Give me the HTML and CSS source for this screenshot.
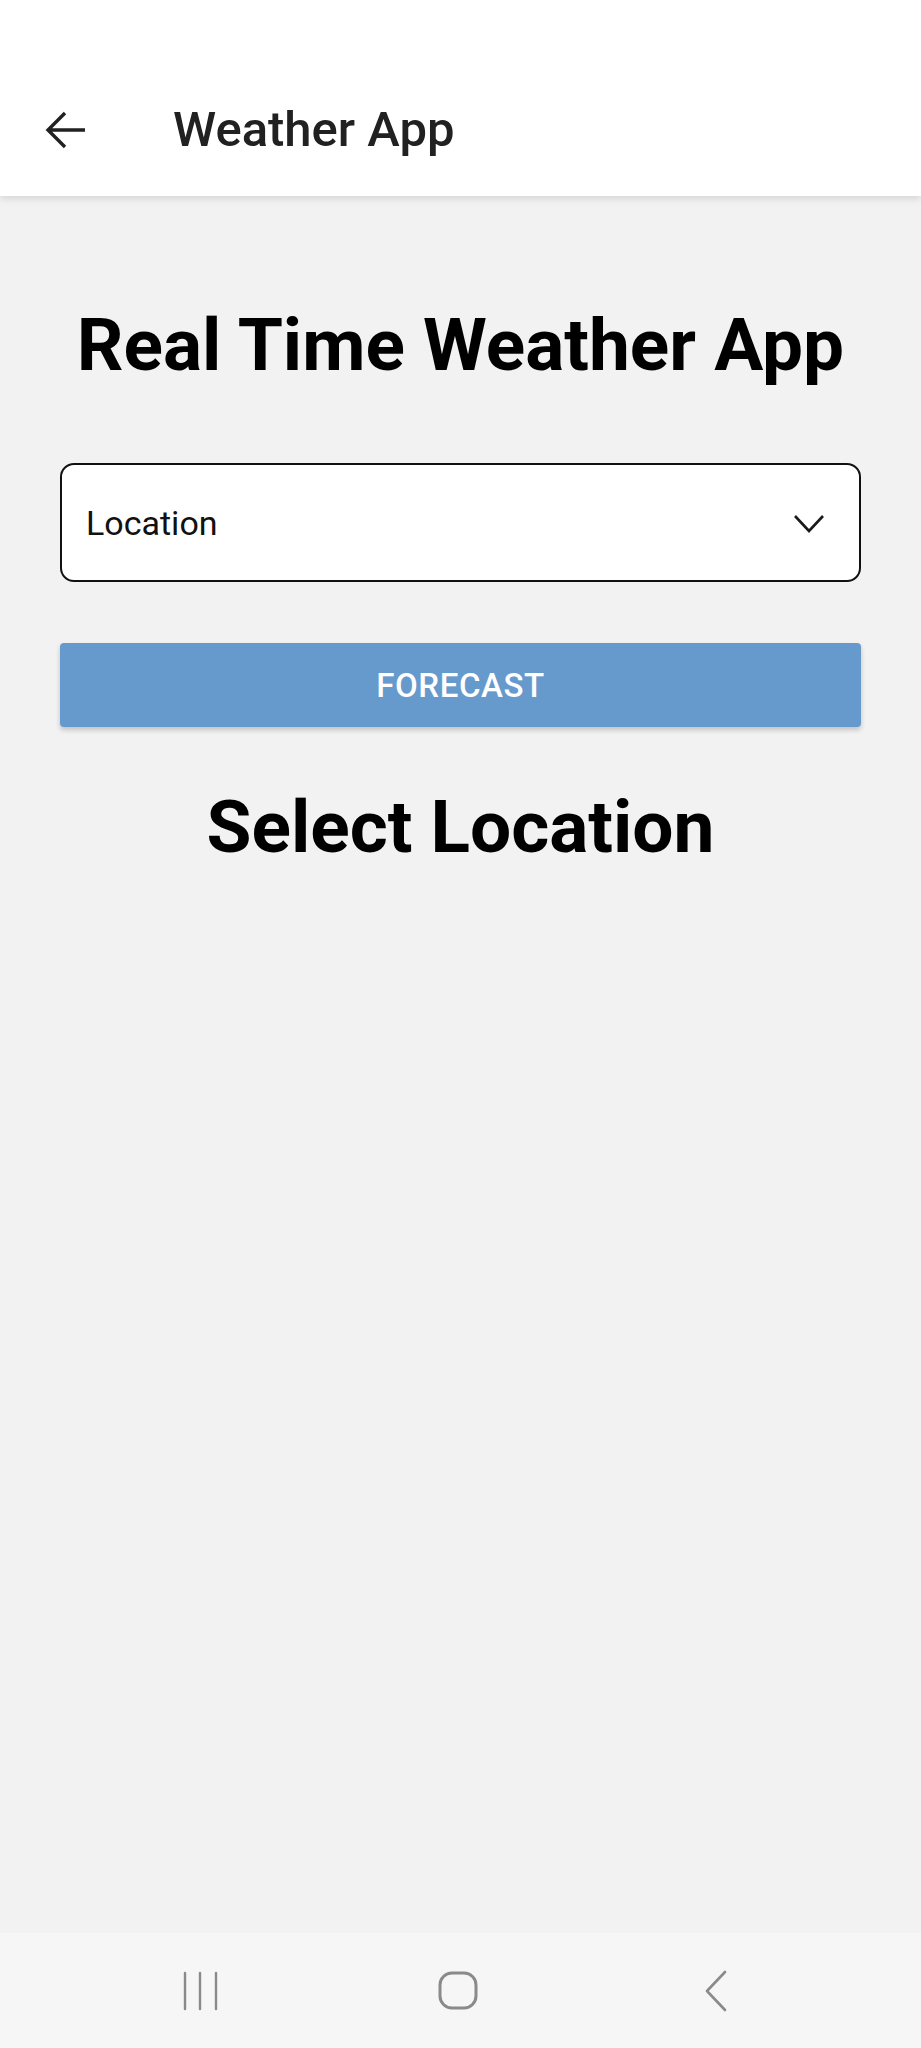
FILE: index.html
```html
<!DOCTYPE html>
<html>
<head>
<meta charset="utf-8">
<link rel="stylesheet" href="styles.css">
</head>
<body>
<div class="screen">
  <header class="topbar">
    <div class="toolbar">
      <svg class="back" width="44" height="40" viewBox="0 0 44 40">
        <path d="M4 20 H41 M21 3 L4 20 L21 37" fill="none" stroke="#212121" stroke-width="3.4" stroke-linecap="butt" stroke-linejoin="miter"/>
      </svg>
      <div class="toolbar-title">Weather App</div>
    </div>
  </header>
  <main class="content">
    <h1 class="title">Real Time Weather App</h1>
    <div class="select">
      <span class="select-text">Location</span>
      <svg class="chev" width="32" height="20" viewBox="0 0 32 20">
        <path d="M2 2 L16 17 L30 2" fill="none" stroke="#1a1a1a" stroke-width="2.6"/>
      </svg>
    </div>
    <button class="btn">FORECAST</button>
    <h2 class="subtitle">Select Location</h2>
  </main>
  <nav class="navbar">
    <div class="nav-item">
      <svg width="40" height="40" viewBox="0 0 40 40">
        <path d="M5 2 V38 M20 2 V38 M36 2 V38" stroke="#8a8a8a" stroke-width="2.4" stroke-linecap="round"/>
      </svg>
    </div>
    <div class="nav-item">
      <svg width="42" height="40" viewBox="0 0 42 40">
        <rect x="3" y="2" width="36" height="35" rx="12" ry="12" fill="none" stroke="#8a8a8a" stroke-width="3"/>
      </svg>
    </div>
    <div class="nav-item">
      <svg width="24" height="42" viewBox="0 0 24 42">
        <path d="M21 2 L3 21 L21 40" fill="none" stroke="#8a8a8a" stroke-width="2.6" stroke-linecap="round" stroke-linejoin="round"/>
      </svg>
    </div>
  </nav>
</div>
</body>
</html>
```
FILE: styles.css
```css
html, body {
  margin: 0;
  padding: 0;
}
body {
  font-family: Roboto, "Noto Sans", "Liberation Sans", sans-serif;
  background: #f2f2f2;
}
.screen {
  width: 921px;
  height: 2048px;
  display: flex;
  flex-direction: column;
  background: #f2f2f2;
}
.topbar {
  height: 196px;
  background: #ffffff;
  box-shadow: 0 2px 8px rgba(0, 0, 0, 0.14);
  position: relative;
  z-index: 1;
  display: flex;
  flex-direction: column;
  justify-content: flex-end;
}
.toolbar {
  height: 132px;
  display: flex;
  align-items: center;
  padding-left: 44px;
}
.back {
  display: block;
  margin-right: 85px;
}
.toolbar-title {
  font-size: 49px;
  font-weight: 500;
  color: #212121;
  line-height: 58px;
}
.content {
  flex: 1;
  display: flex;
  flex-direction: column;
  align-items: stretch;
  padding: 105px 60px 0;
}
.title {
  margin: 0;
  font-size: 73px;
  line-height: 88px;
  font-weight: 700;
  color: #000;
  text-align: center;
}
.select {
  margin-top: 74px;
  height: 115px;
  border: 2px solid #111;
  border-radius: 14px;
  background: #fff;
  display: flex;
  align-items: center;
  justify-content: space-between;
  padding: 0 34px 0 24px;
}
.select-text {
  font-size: 34px;
  color: #111;
}
.chev {
  display: block;
  margin-top: 2px;
}
.btn {
  margin-top: 61px;
  height: 84px;
  border: none;
  border-radius: 4px;
  background: #6699cc;
  color: #fff;
  font-family: Roboto, "Noto Sans", "Liberation Sans", sans-serif;
  font-size: 33px;
  font-weight: 500;
  letter-spacing: 0.6px;
  box-shadow: 0 3px 5px rgba(0, 0, 0, 0.2);
  padding: 0;
}
.subtitle {
  margin: 56px 0 0;
  font-size: 73px;
  line-height: 88px;
  font-weight: 700;
  color: #000;
  text-align: center;
}
.navbar {
  height: 115px;
  background: #f6f6f6;
  display: grid;
  grid-template-columns: 258px 258px 258px;
  justify-content: center;
  align-items: center;
  padding-right: 6px;
}
.nav-item {
  display: flex;
  justify-content: center;
  align-items: center;
}
.nav-item svg {
  display: block;
}
```
